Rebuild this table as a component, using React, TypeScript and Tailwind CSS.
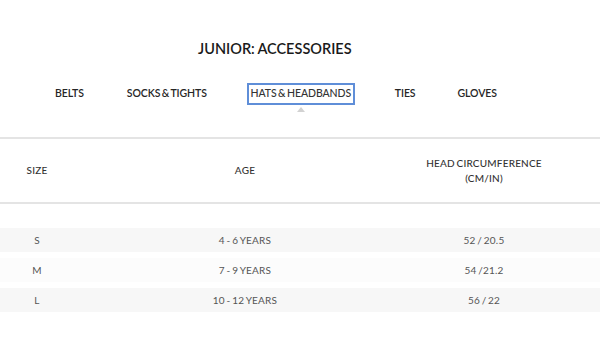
import React from "react";

const rows = [
  { size: "S", age: "4 - 6 YEARS", head: "52 / 20.5", bg: "bg-[#f7f7f7]" },
  { size: "M", age: "7 - 9 YEARS", head: "54 /21.2", bg: "bg-[#fcfcfc]" },
  { size: "L", age: "10 - 12 YEARS", head: "56 / 22", bg: "bg-[#f7f7f7]" },
];

export default function App() {
  return (
    <div
      className="w-[600px] h-[338px] bg-white overflow-hidden text-[#222]"
      style={{ fontFamily: "Lato, 'Noto Sans', sans-serif" }}
    >
      <div className="pt-[41px] pl-[198px]">
        <h1 className="text-[14.5px] font-semibold tracking-[0px] leading-[16px] text-[#1a1a1a] [word-spacing:-0.5px]">
          JUNIOR: ACCESSORIES
        </h1>
      </div>

      <div className="mt-[26px] flex items-center h-[22px] text-[10.5px] font-semibold text-[#262626] tracking-[-0.1px] [word-spacing:-1px]">
        <span className="ml-[55px]">BELTS</span>
        <span className="ml-[43px]">SOCKS &amp; TIGHTS</span>
        <div className="ml-[40px] relative">
          <span className="flex items-center h-[22px] w-[108px] justify-center border-2 border-[#5f8ed8] font-medium text-[#333]">
            HATS &amp; HEADBANDS
          </span>
          <span className="absolute left-1/2 -translate-x-1/2 top-[24px] w-0 h-0 border-l-[4px] border-r-[4px] border-b-[5px] border-l-transparent border-r-transparent border-b-[#d2d2d2]" />
        </div>
        <span className="ml-[40px]">TIES</span>
        <span className="ml-[42px]">GLOVES</span>
      </div>

      <div className="mt-[32px] border-t-2 border-b-2 border-[#e4e4e4] h-[67px] grid grid-cols-[74px_342px_136px] items-center text-[10px] font-medium text-[#333] tracking-[0.2px] [word-spacing:-1px]">
        <div className="text-center">SIZE</div>
        <div className="text-center">AGE</div>
        <div className="text-center leading-[15px]">
          HEAD CIRCUMFERENCE
          <br />
          (CM/IN)
        </div>
      </div>

      <div className="mt-[24px] flex flex-col gap-[6px] text-[10px] text-[#555] tracking-[0.2px] [word-spacing:-1px]">
        {rows.map((r) => (
          <div
            key={r.size}
            className={`${r.bg} h-[24px] grid grid-cols-[74px_342px_136px] items-center`}
          >
            <div className="text-center">{r.size}</div>
            <div className="text-center">{r.age}</div>
            <div className="text-center">{r.head}</div>
          </div>
        ))}
      </div>
    </div>
  );
}
